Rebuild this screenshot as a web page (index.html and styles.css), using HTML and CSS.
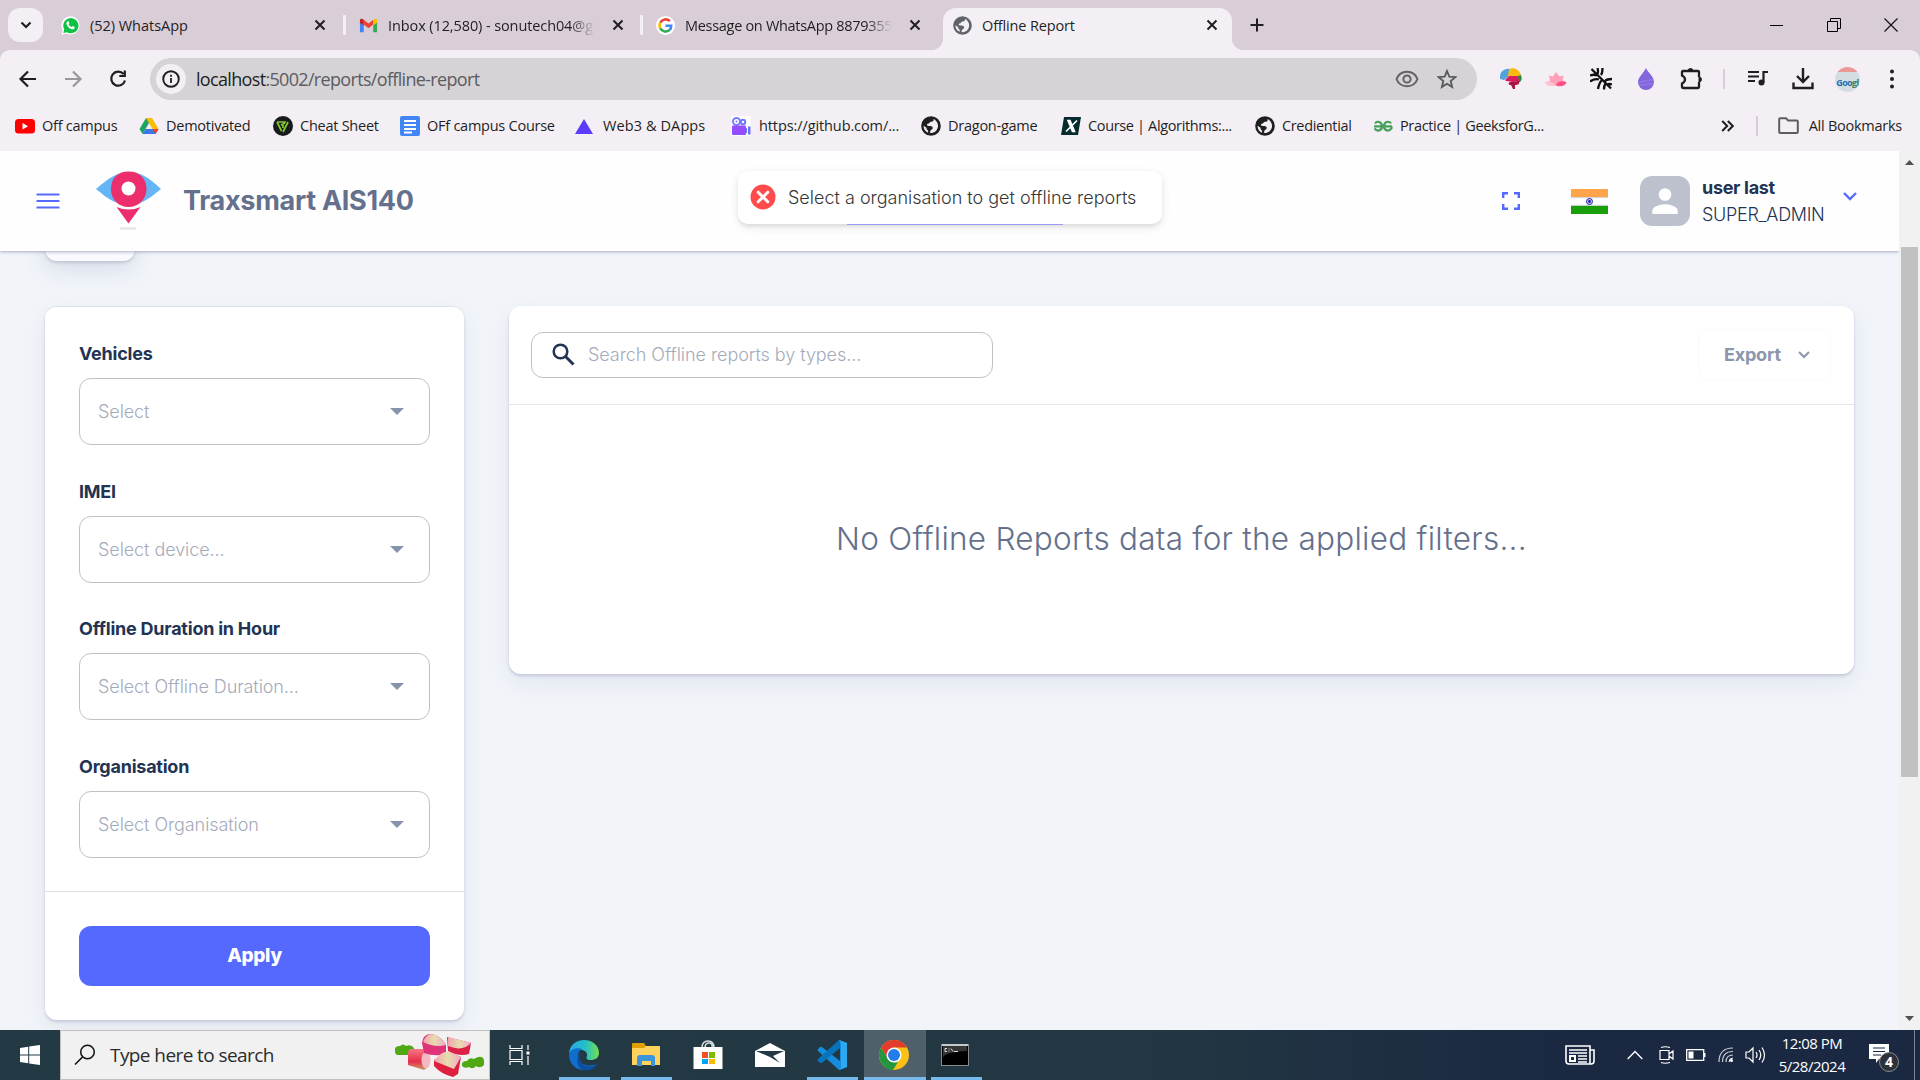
FILE: index.html
```html
<!DOCTYPE html>
<html lang="en">
<head>
<meta charset="utf-8">
<title>Offline Report</title>
<link rel="stylesheet" href="styles.css">
</head>
<body>
<svg class="defs" width="0" height="0">
  <defs>
    <symbol id="close" viewBox="0 0 12 12"><path d="M1.500 1.500l9 9M10.500 1.500l-9 9" fill="none" stroke="#1f1f1f" stroke-width="2"/></symbol>
    <symbol id="globe" viewBox="0 0 20 20"><circle cx="10" cy="10" r="9.800" fill="currentColor"/><path d="M12.500 3c.5 1.800-.3 2.700-2.300 2.700-1.900 0-1.400 1.600-2.600 1.900-1.300.3-1.600.7-1.600 1.300 0 .8 1 1 3.200 1 2 .1 2.700 1.200 2.500 2.400-.2 1.200-1.700 1.400-2.200 2.300-.3.700-.4 1.500-.4 2.400 4.300.2 7.500-2.700 7.900-6.500.3-3.200-1.700-6.100-4.500-7.500zM2.600 9.700c-.2 3.200 1.600 5.800 4.500 7 .2-1.400-.1-2.300-.9-2.900-.7-.6-.7-1.300-.7-2z" fill="#f4eff4"/></symbol>
    <symbol id="caret" viewBox="0 0 14 7"><path d="M0 0h14L7 7z" fill="#8793ab"/></symbol>
  </defs>
</svg>

<div class="tabstrip">
  <div class="tab-search"><svg width="12" height="8" viewBox="0 0 12 8"><path d="M1.500 1.500L6 6l4.500-4.500" fill="none" stroke="#1f1f1f" stroke-width="2.200"/></svg></div>
  <div class="tab tab-first">
    <svg class="fav" viewBox="0 0 20 20"><path d="M.5 19.700l1.300-5A9.500 9.500 0 1 1 5.600 18.300z" fill="#fff"/><path d="M2.400 17.800l1-3.700A8 8 0 1 1 6.200 17z" fill="#0dc143"/><path d="M7 5.500c.5-.2 1 0 1.200.5l.6 1.400c.1.500-.7 1-.7 1.500.7 1.300 1.600 2.100 3 2.700.5 0 .9-1.100 1.400-1l1.700.9c.6.400.1 1.900-.8 2.300-3 1.200-7.700-3.200-7.700-6.300 0-.9.700-1.700 1.300-2z" fill="#fff"/></svg>
    <span class="tab-title">(52) WhatsApp</span><svg class="x"><use href="#close"/></svg>
  </div>
  <div class="tab">
    <svg class="fav" viewBox="0 0 20 20"><path d="M1 17V6l4 3v8z" fill="#4285f4"/><path d="M15 17V9l4-3v11z" fill="#34a853"/><path d="M5 9V4l5 4 5-4v5l-5 4z" fill="#ea4335"/><path d="M1 7V4.500C1 2.400 3.300 2.200 5 4v6z" fill="#c5221f"/><path d="M15 10V4c1.700-1.800 4-1.600 4 .5V7z" fill="#fbbc04"/></svg>
    <span class="tab-title fade inbox">Inbox (12,580) - sonutech04@g</span><svg class="x"><use href="#close"/></svg>
  </div>
  <div class="tab tab-third">
    <svg class="fav" viewBox="0 0 20 20"><circle cx="10" cy="10" r="10" fill="#fff"/><g fill="none" stroke-width="2.700"><path d="M14.600 5.500A6.300 6.300 0 0 0 4.500 7" stroke="#ea4335"/><path d="M4.500 7a6.300 6.300 0 0 0 0 6" stroke="#fbbc05"/><path d="M4.500 13a6.300 6.300 0 0 0 9.700 1.800" stroke="#34a853"/><path d="M14.200 14.800A6 6 0 0 0 16 10.300h-6" stroke="#4285f4"/></g></svg>
    <span class="tab-title fade message">Message on WhatsApp 8879355</span><svg class="x"><use href="#close"/></svg>
  </div>
  <div class="tab active">
    <svg class="fav globe-gray"><use href="#globe"/></svg>
    <span class="tab-title report">Offline Report</span><svg class="x"><use href="#close"/></svg>
  </div>
  <svg class="plus" width="14" height="14" viewBox="0 0 14 14"><path d="M7 .5v13M.5 7h13" stroke="#1f1f1f" stroke-width="2"/></svg>
  <div class="win-controls">
    <svg width="14" height="14" viewBox="0 0 14 14"><path d="M0 7.500h13" stroke="#000"/></svg>
    <svg width="14" height="14" viewBox="0 0 14 14"><path d="M.5 3.500h10v10H.5zM3.500 3V.5h10v10H11" fill="none" stroke="#000"/></svg>
    <svg width="14" height="14" viewBox="0 0 14 14"><path d="M.5.5l13 13M13.500.5l-13 13" stroke="#111" stroke-width="1.200"/></svg>
  </div>
</div>

<div class="toolbar">
  <svg class="nav" viewBox="0 0 20 20"><path d="M18 10H3M10 2.500L2.500 10l7.500 7.500" fill="none" stroke="#1f1f1f" stroke-width="2.200"/></svg>
  <svg class="nav" viewBox="0 0 20 20"><path d="M2 10h15M10 2.500l7.500 7.500-7.500 7.500" fill="none" stroke="#9a989b" stroke-width="2.200"/></svg>
  <svg class="nav" viewBox="0 0 20 20"><path d="M15.500 5A7 7 0 1 0 17 11.500M16.800 1.500V7h-5.500" fill="none" stroke="#1f1f1f" stroke-width="2.200"/></svg>
  <div class="omnibox">
    <div class="info"><svg width="18" height="18" viewBox="0 0 18 18"><circle cx="9" cy="9" r="7.800" fill="none" stroke="#1f1f1f" stroke-width="1.900"/><path d="M9 8v5M9 4.700v2" stroke="#1f1f1f" stroke-width="1.800"/></svg></div>
    <span class="url"><b>localhost</b>:5002/reports/offline-report</span>
    <svg width="24" height="18" viewBox="0 0 24 18"><path d="M1.500 9C3.500 4 7.500 1.800 12 1.800S20.500 4 22.500 9C20.500 14 16.500 16.200 12 16.200S3.500 14 1.500 9z" fill="none" stroke="#626165" stroke-width="2"/><circle cx="12" cy="9" r="3.600" fill="none" stroke="#626165" stroke-width="2"/></svg>
    <svg class="star" width="20" height="20" viewBox="0 0 20 20"><path d="M10 2l2.300 5.600 6 .5-4.600 3.900 1.400 5.900L10 14.800 4.900 17.900 6.300 12 1.700 8.100l6-.5z" fill="none" stroke="#5c5b5f" stroke-width="1.900"/></svg>
  </div>
  <div class="extensions">
    <svg viewBox="0 0 22 22"><path d="M0 9C0 4 4 0 10 1l-1 7-5 4-4-1z" fill="#54a3dc"/><path d="M9 1c5-2 10 0 12 6l-5 3-8-2z" fill="#fbb913"/><path d="M18 8l3-1c1 3 1 5-1 7h-3z" fill="#278d43"/><path d="M5 12l4-4 9 0 1 5-6 1-7-1z" fill="#d91c5c"/><path d="M10 14l9-1c1 3-1 4-4 4v4h-2l-2-4c-3 0-3-2-1-3z" fill="#a81443"/></svg>
    <svg viewBox="0 0 22 22"><path d="M11 4l3.500 4.500 4-1-1 5 3 1c-1 3-4 4.500-9.500 4.500S2 17 2 14l3-1-1-5.500 4 1z" fill="#ffa0b9"/><path d="M11 17c1-3 4-5 10.500-3-1 4-5 5-9 4z" fill="#ff5184"/><path d="M0 14c5-1 9 1 11 4-6 0-10 0-11-4z" fill="#ffc2d0"/></svg>
    <svg viewBox="0 0 22 22"><path d="M1.500 1l19.500 19.500M0 7.500q4-1.500 7 0M0 13.500q5-3.500 9-2M7.500 0q1 3 0 6M12.500 0q0 5-1.500 7M8 21q1-6 4-9M14 21.500q0-4 1.500-6M22 11q-5 0-7 2M22 16.500q-3-1-5 0" fill="none" stroke="#111" stroke-width="2.300"/></svg>
    <svg viewBox="0 0 22 22"><path d="M11 0c2 5 8 8 8 14a8 8 0 0 1-16 0C3 9 9 5 11 0z" fill="#8267dc"/><path d="M3 14c4 1 10-3 15-2M4 17c5 1 8-2 14-1" fill="none" stroke="#9276e6" stroke-width="1.500"/></svg>
    <svg viewBox="0 0 22 22"><path d="M19 9V4q0-1-1-1H3Q2 3 2 4v3.500q3 1.500 3 4T2 15.500V19q0 1 1 1h15q1 0 1-1v-5" fill="none" stroke="#1f1f1f" stroke-width="2.300"/><path d="M8 3a2.500 2.500 0 0 1 5 0zM19 9a2.500 2.500 0 0 1 0 5z" fill="#1f1f1f" stroke="#1f1f1f"/></svg>
    <i class="sep"></i>
    <svg viewBox="0 0 22 22"><path d="M1 4h11M1 8.500h11M1 13h7M21 4h-4.500v10" fill="none" stroke="#1f1f1f" stroke-width="2.200"/><circle cx="14.500" cy="14.500" r="3" fill="#1f1f1f"/></svg>
    <svg viewBox="0 0 22 22"><path d="M11 0v13M5 8l6 6 6-6M1.500 14.500v5.500h19v-5.500" fill="none" stroke="#1f1f1f" stroke-width="2.400"/></svg>
    <div class="avatar-g"><span class="g1">Goo</span><span class="g2">gl</span></div>
    <svg viewBox="0 0 22 22"><g fill="#1f1f1f"><circle cx="11" cy="3.500" r="2"/><circle cx="11" cy="11" r="2"/><circle cx="11" cy="18.500" r="2"/></g></svg>
  </div>
</div>

<div class="bookmarks">
  <div class="marks">
    <div class="mark"><svg viewBox="0 0 20 20"><rect y="3" width="20" height="14.500" rx="3.500" fill="#f00"/><path d="M7.500 7v6.500l5.500-3.200z" fill="#fff"/></svg>Off campus</div>
    <div class="mark"><svg viewBox="0 0 20 20"><path d="M7 2h6L6.500 13 3.500 18 .5 13z" fill="#1da462"/><path d="M7 2h6l6.500 11h-6z" fill="#fbbc04"/><path d="M6.500 13h13l-3 5h-13z" fill="#3b78e7"/><path d="M13.500 13h6l-3 5z" fill="#ea4335"/></svg>Demotivated</div>
    <div class="mark"><svg viewBox="0 0 20 20"><circle cx="10" cy="10" r="10" fill="#191a1e"/><path d="M4 6h9M4 6l4.500 9M8 9l4-2M15 6l-5 10M10 9v3" fill="none" stroke="#82c62c" stroke-width="1.700"/></svg>Cheat Sheet</div>
    <div class="mark"><svg viewBox="0 0 20 20"><rect width="20" height="20" rx="2" fill="#4285f4"/><path d="M4 5h12M4 9h12M4 13h12M4 16.500h8" stroke="#fff" stroke-width="2"/></svg>OFf campus Course</div>
    <div class="mark web3"><svg viewBox="0 0 20 20"><path d="M9 3l9 15H0z" fill="#5c3bfb"/></svg>Web3 &amp; DApps</div>
    <div class="mark github"><svg viewBox="0 0 20 20"><rect width="20" height="20" fill="#fff"/><circle cx="5.500" cy="5.500" r="3.500" fill="none" stroke="#7b7cff" stroke-width="2"/><circle cx="12" cy="6" r="2.200" fill="none" stroke="#6b78ff" stroke-width="2"/><rect x="1" y="9.500" width="14" height="9.500" rx="1" fill="#944dff"/><path d="M15 12h1v5h-1zM17 10.500h2.500v8H17z" fill="#6a70ff"/><circle cx="5.500" cy="5.500" r="1" fill="#7b7cff"/></svg>https://github.com/...</div>
    <div class="mark"><svg class="globe-dark"><use href="#globe"/></svg>Dragon-game</div>
    <div class="mark"><svg viewBox="0 0 20 20"><path d="M3 1h17l-3 18H0z" fill="#042c2c"/><path d="M7 4.500h2l4.500 11h-2zM16 4.500L5 15.500" fill="#fff" stroke="#fff" stroke-width="1.700"/></svg>Course | Algorithms:...</div>
    <div class="mark"><svg class="globe-dark"><use href="#globe"/></svg>Crediential</div>
    <div class="mark"><svg viewBox="0 0 20 20"><path d="M1 10.300h18M2 7.500c2-3 7-2 7 2.800s-5 5.500-7.500 2M18 7.500c-2-3-7-2-7 2.800s5 5.500 7.500 2v-2" fill="none" stroke="#45a05b" stroke-width="2.200"/></svg>Practice | GeeksforG...</div>
  </div>
  <svg width="13" height="12" viewBox="0 0 13 12"><path d="M1.200 1l5 5-5 5M6.800 1l5 5-5 5" fill="none" stroke="#1f1f1f" stroke-width="2"/></svg>
  <i class="sep"></i>
  <svg class="folder" width="21" height="17" viewBox="0 0 21 17"><path d="M1.200 14V2.200q0-1 1-1H8l2 2.300h8.800q1 0 1 1V15q0 1-1 1H2.200q-1 0-1-1z" fill="none" stroke="#5d5c60" stroke-width="2"/></svg>
  <span class="all">All Bookmarks</span>
</div>

<div class="viewport">
  <div class="page">
    <header class="header">
      <svg class="burger" width="24" height="16" viewBox="0 0 24 16"><path d="M.5 1.500h23M.5 8h23M.5 14.500h23" stroke="#5569ff" stroke-width="2.200"/></svg>
      <svg class="logo" width="66" height="60" viewBox="0 0 66 60"><path d="M0 18C14 6 22 1 33 1s19 5 32 17C52 29 43 34 32.500 34S13 29 0 18z" fill="#64b5f6"/><path d="M32.500.5C44 .5 50.500 8 50.500 18S43 36 32.500 36 15 28 15 18 21 .5 32.500.5z" fill="#ed2e6c"/><circle cx="32.500" cy="17.500" r="7" fill="#fff"/><path d="M20.500 36q12 5 24 0L32.500 52.500z" fill="#ed2e6c"/><path d="M24 57.500h16" stroke="#dfe4e4" stroke-width="2"/></svg>
      <h1>Traxsmart AIS140</h1>
      <svg class="fullscreen" width="18" height="18" viewBox="0 0 18 18"><path d="M1.200 6V1.200H6M12 1.200h4.800V6M16.800 12v4.800H12M6 16.800H1.200V12" fill="none" stroke="#5569ff" stroke-width="2.400"/></svg>
      <svg class="flag" width="37" height="25" viewBox="0 0 37 25"><rect width="37" height="25" fill="#fff"/><rect width="37" height="8.300" fill="#ffa44a"/><rect y="16.700" width="37" height="8.300" fill="#1a9f0b"/><path d="M0 8.700h37M0 16.300h37" stroke="#c9cce0" stroke-width=".8"/><circle cx="18.500" cy="12.500" r="3" fill="#c8c8f0" stroke="#2222a0"/><circle cx="18.500" cy="12.500" r="1.400" fill="#1d1da0"/></svg>
      <div class="avatar"><svg width="26" height="26" viewBox="0 0 26 26"><circle cx="13" cy="6.500" r="6.300" fill="#fff"/><path d="M.3 26v-3C.3 18.500 8 16.300 13 16.300S25.700 18.500 25.700 23v3z" fill="#fff"/></svg></div>
      <div class="user"><strong>user last</strong><span>SUPER_ADMIN</span></div>
      <svg class="chev" width="14" height="9" viewBox="0 0 14 9"><path d="M1 1l6 6 6-6" fill="none" stroke="#5569ff" stroke-width="2.400"/></svg>
    </header>
    <div class="scrolled-card"></div>
    <div class="toast-line"></div>
    <div class="toast">
      <svg width="26" height="26" viewBox="0 0 26 26"><circle cx="13" cy="13" r="12.500" fill="#ff4b4b"/><path d="M8.200 8.200l9.600 9.600M17.800 8.200l-9.600 9.600" stroke="#fff" stroke-width="3" stroke-linecap="round"/></svg>
      <span>Select a organisation to get offline reports</span>
    </div>
    <main class="content">
      <form class="card filters">
        <div class="fields">
          <div class="field"><label>Vehicles</label><div class="select"><span>Select</span><svg width="14" height="7"><use href="#caret"/></svg></div></div>
          <div class="field"><label>IMEI</label><div class="select"><span>Select device...</span><svg width="14" height="7"><use href="#caret"/></svg></div></div>
          <div class="field"><label>Offline Duration in Hour</label><div class="select"><span>Select Offline Duration...</span><svg width="14" height="7"><use href="#caret"/></svg></div></div>
          <div class="field"><label>Organisation</label><div class="select"><span>Select Organisation</span><svg width="14" height="7"><use href="#caret"/></svg></div></div>
        </div>
        <div class="actions"><button type="button" class="apply">Apply</button></div>
      </form>
      <section class="card results">
        <div class="results-bar">
          <div class="search"><svg width="23" height="23" viewBox="0 0 23 23"><circle cx="8.500" cy="8.500" r="6.800" fill="none" stroke="#223354" stroke-width="2.500"/><path d="M13.500 13.500l8 8" stroke="#223354" stroke-width="3"/></svg><span>Search Offline reports by types...</span></div>
          <div class="export"><span>Export</span><svg width="12" height="8" viewBox="0 0 12 8"><path d="M1 1l5 5 5-5" fill="none" stroke="#8b95ab" stroke-width="2"/></svg></div>
        </div>
        <p class="empty">No Offline Reports data for the applied filters...</p>
      </section>
    </main>
  </div>
  <div class="scrollbar">
    <svg width="9" height="5"><path d="M0 5h9L4.500 0z" fill="#505050"/></svg>
    <div class="thumb"></div>
    <svg class="down" width="9" height="5"><path d="M0 0h9L4.500 5z" fill="#505050"/></svg>
  </div>
</div>

<div class="taskbar">
  <div class="start"><svg width="20" height="20" viewBox="0 0 20 20"><path d="M0 3l8.200-1.200v7.700H0zM9.200 1.600L20 0v9.500H9.200zM0 10.500h8.200v7.700L0 17zM9.200 10.500H20V20L9.200 18.400z" fill="#fff"/></svg></div>
  <div class="task-search">
    <svg width="22" height="22" viewBox="0 0 22 22"><circle cx="13.500" cy="8" r="6.800" fill="none" stroke="#111" stroke-width="1.500"/><path d="M8.500 13L1 20.500" stroke="#111" stroke-width="1.600"/></svg>
    <span>Type here to search</span>
    <svg class="rhubarb" width="90" height="46" viewBox="0 0 90 46">
      <defs>
        <linearGradient id="stalk" x2="0" y2="1"><stop stop-color="#f77783"/><stop offset=".6" stop-color="#e5304a"/><stop offset="1" stop-color="#c9a06a"/></linearGradient>
        <linearGradient id="flesh"><stop stop-color="#f2a4b4"/><stop offset=".5" stop-color="#e6dcae"/><stop offset="1" stop-color="#f3aac8"/></linearGradient>
      </defs>
      <path d="M1 19q-1-5 5-5 3-3 6 0 5-2 8 2v7H4q-3 0-3-4zM68 34q-1-5 5-5 2-4 7-2 8-5 10 1v5q-4 4-8 1-3 4-7 1-4 2-7-1z" fill="#4fa814"/>
      <path d="M14 20q1-3 4-3h16v18l-4 3-16-5z" fill="url(#stalk)"/><ellipse cx="32" cy="28" rx="4.500" ry="8.500" fill="#f4b8c1"/>
      <path d="M28 11C30-3 45 1 52 13v9q-11 3-22-1z" fill="#e0347a"/><path d="M29 10C34-3 45 2 52 13q-11 3-23-3z" fill="url(#flesh)"/>
      <path d="M53 5l1 14q11 6 21 3l2-11z" fill="#dc2048"/><path d="M54 5l23 6q-8 9-23 3z" fill="url(#flesh)"/>
      <path d="M40 28l15-8 12 5-3 17-5 3q-12-3-19-11z" fill="#df1f3e"/><path d="M40 29q8-11 16-9l11 5-7 12z" fill="url(#flesh)"/>
    </svg>
  </div>
  <div class="task-view"><svg width="22" height="20" viewBox="0 0 22 20"><path d="M1 0v3.500h12V0M1 20v-3.500h12V20M1 5.500h12v9H1zM19 0v5M19 11v9" fill="none" stroke="#fff" stroke-width="1.200"/><rect x="17.500" y="6.500" width="3" height="3" fill="#fff"/></svg></div>
  <div class="app open"><svg width="30" height="30" viewBox="0 0 30 30"><defs><linearGradient id="edge"><stop stop-color="#28a8e8"/><stop offset=".55" stop-color="#24bfc8"/><stop offset="1" stop-color="#74e04c"/></linearGradient></defs><path d="M0 13C1 5 7 0 15 0c9 0 15 6 15 13 0 5-4 7-8 7-5 0-5-2-4-4 1-4-4-7-9-6-4 0-7 1-9 3z" fill="url(#edge)"/><path d="M0 15c0-6 8-8 13-6-4 2-5 7-3 11 3 5 10 7 18 4-4 7-12 7-15 6C5 29 0 22 0 15z" fill="#0f6fcb"/><path d="M13 12c-4 4-3 10 2 13 4 2 9 2 13-1-3 6-9 7-14 6-7-3-8-14-1-18z" fill="#0b4f9e"/></svg></div>
  <div class="app open"><svg width="28" height="24" viewBox="0 0 28 24"><path d="M0 1q0-1 1-1h11l2 3h13q1 0 1 1v5H0z" fill="#e0a000"/><path d="M0 5h12l2-2h13q1 0 1 1v18H0z" fill="#ffd25c"/><path d="M5 23v-8q0-3 3-3h12q3 0 3 3v8h-4v-5h-9v5z" fill="#3a95dd"/></svg></div>
  <div class="app"><svg width="30" height="30" viewBox="0 0 30 30"><path d="M9 8q0-7 6-7t6 7M12 8q0-5 4-5t3 5" fill="none" stroke="#d4dbdd" stroke-width="1.500"/><path d="M.5 7h29v22h-29z" fill="#fff"/><path d="M9 12h6v6H9z" fill="#f25022"/><path d="M16 12h6v6h-6z" fill="#7fba00"/><path d="M9 19h6v5H9z" fill="#00a4ef"/><path d="M16 19h6v5h-6z" fill="#ffb900"/></svg></div>
  <div class="app mail"><svg width="30" height="26" viewBox="0 0 30 26"><path d="M0 9L15 1l15 8v16H0z" fill="#fff"/><path d="M1 9h28L18 14l7 7-10-6z" fill="#223844"/></svg></div>
  <div class="app open"><svg width="30" height="30" viewBox="0 0 30 30"><path d="M22 0l8 3v24l-8 3L1 11q-1-1 0-2l2-2h2l18 14V8z" fill="#168cdd"/><path d="M22 0L1 19q-1 1 0 2l2 2h2L23 8z" fill="#0873ba"/><path d="M22 0l8 3v24l-8 3q2-1 2-4V4q0-3-2-4z" fill="#2da9f2"/></svg></div>
  <div class="app open current"><svg width="30" height="30" viewBox="0 0 30 30"><circle cx="15" cy="15" r="15" fill="#fbc116"/><path d="M2 7.500A15 15 0 0 1 28 7.500H15L9 19z" fill="#e33b2e"/><path d="M2 7.500L9 19q4 5 10 3l-5 8A15 15 0 0 1 2 7.500z" fill="#23963f"/><circle cx="15" cy="15" r="7.500" fill="#fff"/><circle cx="15" cy="15" r="6" fill="#267bea"/></svg></div>
  <div class="app open cmd"><svg width="28" height="24" viewBox="0 0 28 24"><rect x=".5" y="1.500" width="27" height="21" fill="#000" stroke="#858b8e"/><path d="M1 1h26v2H1z" fill="#c5c9cb"/><path d="M2 15q1-6 24-7V3H2z" fill="#363636"/><path d="M6 5.500H4v3h2M8 5.500v1M8 7.500v1M10 5.500l2 3M13 8.500h4" fill="none" stroke="#ddd"/></svg></div>
  <div class="tray">
    <svg width="30" height="21" viewBox="0 0 30 21"><path d="M1 1h24v18H4q-3 0-3-3zM25 5h4v11q0 3-3 3h-3M4 5h18M4 8h18M13 11h9M13 14h9M13 17h9" fill="none" stroke="#fff" stroke-width="1.600"/><path d="M5 11h5v5H5z" fill="none" stroke="#fff" stroke-width="2"/></svg>
    <svg class="t-up" width="16" height="10" viewBox="0 0 16 10"><path d="M.7 9L8 1.500 15.300 9" fill="none" stroke="#fff" stroke-width="1.400"/></svg>
    <svg class="t-cam" width="15" height="18" viewBox="0 0 15 18"><path d="M1 4.500h9v9H1zM10 8l4-3v8l-4-3M2 1.500q4-1.500 9 0M2 16.500q4 1.500 9 0" fill="none" stroke="#fff" stroke-width="1.200"/></svg>
    <svg class="t-bat" width="20" height="12" viewBox="0 0 20 12"><path d="M.7.700h17v10.600H.7z" fill="none" stroke="#fff" stroke-width="1.300"/><path d="M2.500 2.500h5v7h-5zM18 4h1.500v4H18z" fill="#fff"/></svg>
    <svg class="t-wifi" width="16" height="16" viewBox="0 0 16 16"><path d="M1 15Q1 1 15 1M4.500 15Q4.500 4.500 15 4.500M8 15Q8 8 15 8" fill="none" stroke="#c8ced8" stroke-width="1.200"/><path d="M11 15q0-4 4-4" fill="none" stroke="#fff"/><circle cx="13.500" cy="13.500" r="1.500" fill="#fff"/></svg>
    <svg class="t-vol" width="21" height="18" viewBox="0 0 21 18"><path d="M1 6h3l4-4v14l-4-4H1zM11 6q2 3 0 6M14 4q3.500 5 0 10M17 1.500q5 7.500 0 15" fill="none" stroke="#fff" stroke-width="1.200"/></svg>
    <div class="clock"><span>12:08 PM</span><span>5/28/2024</span></div>
    <div class="notify"><svg width="20" height="19" viewBox="0 0 20 19"><path d="M0 0h20v15H10l-3 4v-4H0z" fill="#fff"/><path d="M4 4h12M4 7.500h12M4 11h8" stroke="#1b2842" stroke-width="1.200"/></svg><b>4</b></div>
    <i class="peek"></i>
  </div>
</div>
</body>
</html>
```
FILE: styles.css
```css
* { box-sizing: border-box; }
body {
  margin: 0; width: 1920px; height: 1080px; overflow: hidden;
  display: flex; flex-direction: column;
  font-family: "Inter", sans-serif; color: #223354; background: #d9cdd8;
}
svg { display: block; flex: none; }
.defs { position: absolute; }

.tabstrip, .toolbar, .bookmarks, .taskbar { font-family: "Open Sans", "Noto Sans", sans-serif; }

/* Tab strip */
.tabstrip { height: 50px; flex: none; display: flex; align-items: stretch; padding-left: 8px; background: #d9cdd8; }
.tab-search { width: 35px; height: 34px; margin-top: 8px; border-radius: 12px; background: #f4eff4; display: flex; align-items: center; justify-content: center; }
.tab { width: 297px; display: flex; align-items: center; padding: 0 17px 0 15px; position: relative; }
.tab-first { width: 301px; padding-left: 18px; padding-right: 18px; }
.tab:nth-child(3)::before, .tab:nth-child(4)::before { content: ""; position: absolute; left: -1px; top: 15px; width: 3px; height: 20px; background: #f4eff4; border-radius: 1px; }
.tab-third { width: 302px; padding-right: 22px; }
.fav { width: 19px; height: 19px; margin-right: 10px; }
.tab-title { flex: 1; font-size: 14.500px; letter-spacing: -.03px; color: #1f1f1f; white-space: nowrap; margin-right: 17px; }
.inbox { letter-spacing: -.1px; }
.message { letter-spacing: -.3px; }
.report { letter-spacing: -.15px; }
.fade { -webkit-mask-image: linear-gradient(90deg, #000 88%, transparent 100%); mask-image: linear-gradient(90deg, #000 88%, transparent 100%); }
.x { width: 12px; height: 12px; }
.active { width: 289px; margin-top: 8px; background: #f4eff4; border-radius: 13px 13px 0 0; padding: 0 14px 8px 10px; height: 42px; }
.active::before, .active::after { content: ""; position: absolute; bottom: 0; width: 12px; height: 12px; }
.active::before { left: -12px; background: radial-gradient(circle at 0 0, transparent 12px, #f4eff4 12.500px); }
.active::after { right: -12px; background: radial-gradient(circle at 100% 0, transparent 12px, #f4eff4 12.500px); }
.globe-gray { color: #5f6368; }
.globe-dark { color: #1f1f1f; }
.plus { align-self: center; margin-left: 18px; }
.win-controls { margin-left: auto; display: flex; align-items: center; gap: 43px; padding-right: 22px; }

/* Address bar */
.toolbar { height: 58px; flex: none; display: flex; align-items: center; background: #f4eff4; border-radius: 10px 10px 0 0; padding-left: 18px; }
.nav { width: 20px; height: 20px; margin-right: 25px; }
.omnibox { width: 1327px; height: 42px; border-radius: 21px; background: #d5d3d6; display: flex; align-items: center; padding: 0 18px 0 6px; margin-left: -3px; }
.info { width: 30px; height: 30px; border-radius: 50%; background: #f4eff4; display: flex; align-items: center; justify-content: center; margin-right: 10px; }
.url { flex: 1; font-size: 18px; letter-spacing: -.67px; color: #5c5b5f; }
.url b { font-weight: 400; color: #1f1f1f; }
.star { margin-left: 18px; margin-right: 2px; }
.extensions { display: flex; flex: 1; align-items: center; padding-left: 23px; gap: 23px; }
.extensions svg { width: 22px; height: 22px; }
.sep { width: 2px; height: 20px; background: #d9cdd8; flex: none; }
.extensions .sep { margin: 0 -1px 0 -2px; }
.avatar-g { width: 25px; height: 25px; margin: 0 -2px; border-radius: 50%; background: linear-gradient(#e99a96 0 20%, #d3dde2 20% 100%); font-size: 9px; font-weight: 700; letter-spacing: -.6px; line-height: 31px; overflow: hidden; text-align: center; }
.g1 { color: #286eb1; }
.g2 { color: #34804f; }

/* Bookmarks */
.bookmarks { height: 43px; flex: none; display: flex; align-items: center; background: #f4eff4; padding: 0 18px 8px 15px; font-size: 14.500px; letter-spacing: -.25px; color: #1f1f1f; }
.marks { flex: 1; display: grid; grid-template-columns: 124px 134px 127px 175px 156px 190px 140px 194px 118px auto; }
.mark { display: flex; align-items: center; gap: 7px; white-space: nowrap; }
.mark:nth-child(n+8) { letter-spacing: -.35px; }
.mark svg { width: 20px; height: 20px; }
.web3 { letter-spacing: .1px; gap: 8px; }
.github { letter-spacing: -.1px; gap: 8px; }
.bookmarks .sep { margin: 0 20px 0 22px; }
.folder { margin-right: 10px; }

/* Page viewport */
.viewport { height: 879px; flex: none; display: flex; background: #f1f5fa; overflow: hidden; }
.page { flex: 1; position: relative; overflow: hidden; }
.header { height: 100px; background: #fefefe; display: flex; align-items: center; padding: 0 42px 0 36px; position: relative; z-index: 2; box-shadow: 0 1px 3px rgba(120, 120, 170, .6); }
.logo { margin: 0 21px 0 36px; }
h1 { margin: 0; flex: 1; font-size: 27px; font-weight: 700; color: #64708c; letter-spacing: -.28px; padding-bottom: 1px; }
.fullscreen { margin-right: 51px; }
.flag { margin-right: 32px; }
.avatar { width: 50px; height: 50px; border-radius: 12px; background: #bcc1cd; display: flex; align-items: center; justify-content: center; margin-right: 12px; }
.user { display: flex; flex-direction: column; width: 141px; line-height: 27px; font-size: 18px; }
.user strong { font-weight: 700; letter-spacing: -.3px; }
.user span { font-weight: 300; letter-spacing: -.3px; }
.chev { margin-top: -9px; }
.scrolled-card { position: absolute; left: 45px; top: 60px; width: 90px; height: 50px; border-radius: 12px; background: #f9fafd; box-shadow: 0 8px 22px rgba(110, 117, 150, .2), 0 2px 3px rgba(110, 117, 150, .25); }
.toast { position: absolute; z-index: 4; left: 738px; top: 20px; width: 424px; height: 53px; border-radius: 10px; background: #fff; box-shadow: 0 3px 10px rgba(0, 0, 0, .1), 0 3px 3px rgba(0, 0, 0, .05); display: flex; align-items: center; padding: 0 0 1px 12px; gap: 12px; color: #363636; font-weight: 300; font-size: 18px; white-space: nowrap; }
.toast-line { position: absolute; z-index: 5; left: 847px; top: 73px; width: 216px; height: 1px; background: #9a9cf0; }

.content { display: flex; align-items: flex-start; gap: 45px; padding: 55px 45px 0; }
.card { background: #fff; border-radius: 12px; box-shadow: 0 9px 20px rgba(159, 162, 191, .18), 0 2px 3px rgba(159, 162, 191, .45); }
.filters { width: 419px; height: 714px; border-top: 1px solid #dfe2e9; }
.fields { height: 585px; padding: 34px 34px 0; border-bottom: 1px solid #dfe0e2; }
.field { height: 137.600px; }
label { display: block; height: 37px; line-height: 26px; font-size: 18px; font-weight: 700; letter-spacing: -.23px; }
.select { height: 67px; border: 1px solid #bfc1c5; border-radius: 12px; display: flex; align-items: center; justify-content: space-between; padding: 0 25px 0 18px; font-size: 18px; font-weight: 300; letter-spacing: -.08px; color: #a4abbb; }
.actions { padding: 34px; }
.apply { display: block; width: 351px; height: 60px; border: 0; border-radius: 12px; background: #5569ff; color: #fff; font-family: inherit; font-size: 19px; font-weight: 800; letter-spacing: -.3px; padding-bottom: 3px; }
.results { width: 1345px; height: 368px; }
.results-bar { height: 99px; border-bottom: 1px solid #e6e7ea; display: flex; align-items: center; justify-content: space-between; padding: 0 23px 0 22px; }
.search { width: 462px; height: 46px; border: 1px solid #bfc1c5; border-radius: 12px; display: flex; align-items: center; gap: 13px; padding: 0 0 1px 20px; font-size: 18px; font-weight: 300; letter-spacing: -.06px; color: #a4abbb; }
.export { width: 133px; height: 52px; border: 1px solid #fafafb; border-radius: 12px; display: flex; align-items: center; gap: 17px; padding: 0 0 1px 25px; font-size: 18px; font-weight: 700; letter-spacing: -.2px; color: #8b95ab; }
.empty { margin: 0; height: 268px; line-height: 267px; text-align: center; font-size: 31.500px; font-weight: 300; color: #64708c; letter-spacing: .26px; }

.scrollbar { width: 21px; background: #f1f1f1; display: flex; flex-direction: column; align-items: center; padding: 9px 0 9px; }
.thumb { width: 17px; height: 530px; margin-top: 82px; background: #c1c1c1; }
.down { margin-top: auto; }

/* Taskbar */
.taskbar { height: 50px; flex: none; display: flex; background: linear-gradient(90deg, #233a45 0, #223742 60%, #1b2842 82%, #1b2842 100%); color: #fff; }
.start { width: 60px; display: flex; align-items: center; justify-content: center; }
.task-search { width: 430px; background: #f1f1f1; border: 1px solid #c0c0c0; display: flex; align-items: center; padding: 0 5px 0 13px; color: #2c2c2c; font-size: 19px; letter-spacing: -.58px; }
.task-search span { flex: 1; margin-left: 14px; }
.task-view { width: 60px; display: flex; align-items: center; padding-left: 19px; }
.app { width: 62px; display: flex; align-items: center; justify-content: center; position: relative; padding-right: 2px; }
.app:nth-child(4) { margin-left: 4px; }
.open::after { content: ""; position: absolute; left: 5px; right: 6px; bottom: 0; height: 3px; background: #76b9ed; }
.current { background: #50606a; }
.current::after { left: 0; right: 0; }
.cmd { padding-right: 4px; }
.tray { margin-left: auto; display: flex; align-items: center; }
.t-up { margin-left: 32px; }
.t-cam { margin-left: 16px; }
.t-bat { margin-left: 12px; }
.t-wifi { margin-left: 12px; }
.t-vol { margin-left: 11px; }
.clock { width: 92px; text-align: center; font-size: 15px; line-height: 23px; letter-spacing: -.5px; display: flex; flex-direction: column; }
.notify { width: 46px; height: 22px; padding: 0 0 0 11px; position: relative; }
.notify b { position: absolute; left: 21px; top: 8px; width: 20px; height: 20px; border-radius: 50%; border: 1px solid #85898f; background: #2d3138; font-size: 14px; line-height: 18px; text-align: center; }
.peek { width: 1px; height: 50px; background: #7d8594; margin: 0 5px 0 10px; }
```
